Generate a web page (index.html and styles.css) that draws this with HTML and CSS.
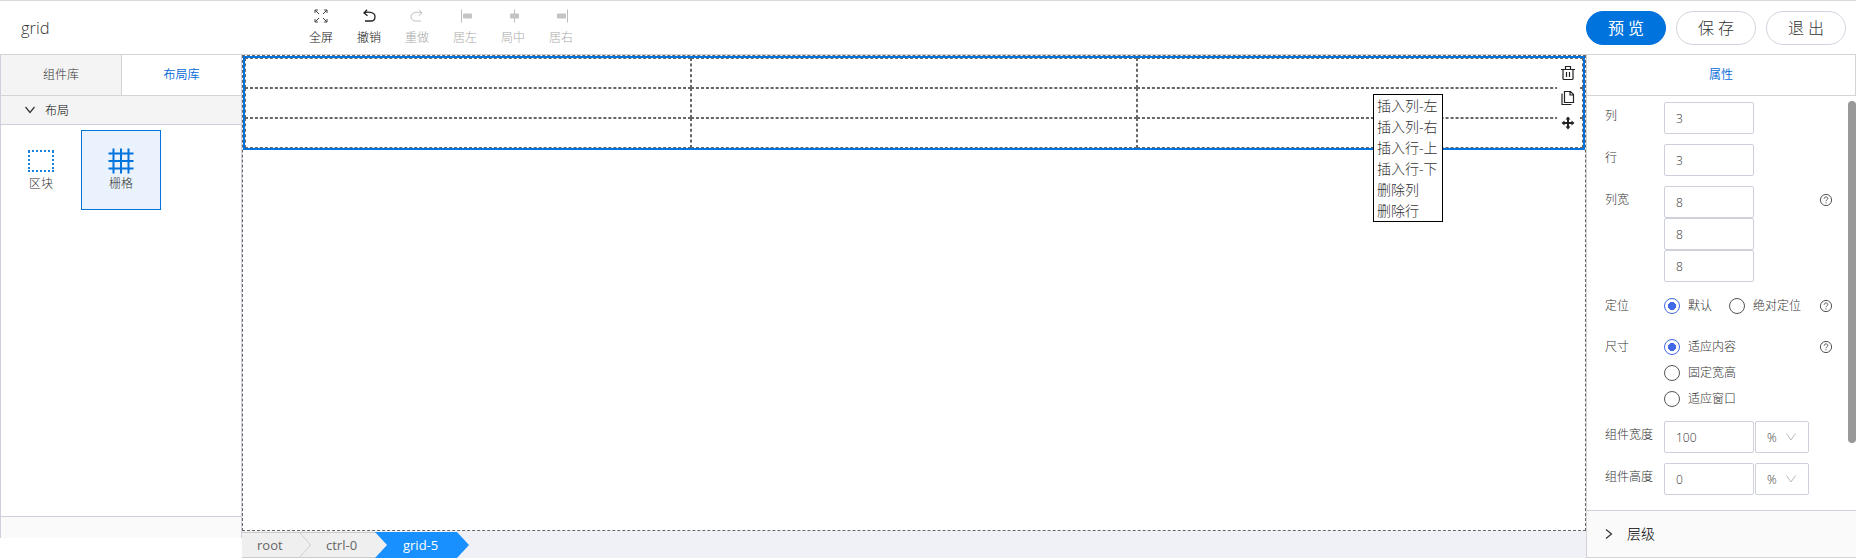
FILE: index.html
```html
<!DOCTYPE html>
<html lang="zh-CN">
<head>
<meta charset="utf-8">
<title>grid</title>
<link rel="stylesheet" href="styles.css">
</head>
<body>
<header class="header">
  <div class="title">grid</div>
  <nav class="tools">
    <div class="tool"><svg width="14" height="14" viewBox="0 0 14 14"><path d="M5 5 1 1M1 4V1h3M9 5l4-4M10 1h3v3M5 9l-4 4M1 10v3h3M9 9l4 4M13 10v3h-3"/></svg><span>全屏</span></div>
    <div class="tool undo"><svg width="14" height="14" viewBox="0 0 14 14"><path d="M5 .8 2 4l3.500 2.800M2 4c3-1.300 11-1.500 11 3.700 0 3-2 4.300-4 4.300H3"/></svg><span>撤销</span></div>
    <div class="tool off"><svg width="14" height="14" viewBox="0 0 14 14"><path d="M9 .8 12 4 8.500 6.800M12 4C9 2.700 1 2.500 1 7.700 1 10.700 3 12 5 12h6"/></svg><span>重做</span></div>
    <div class="tool off"><svg width="14" height="14" viewBox="0 0 14 14"><path d="M3.500 .5v13"/><rect class="solid" x="5" y="4.500" width="9" height="5" rx="1"/></svg><span>居左</span></div>
    <div class="tool off"><svg width="14" height="14" viewBox="0 0 14 14"><path d="M8.500 .5v13"/><rect class="solid" x="4" y="4.500" width="9" height="5" rx="1"/></svg><span>局中</span></div>
    <div class="tool off"><svg width="14" height="14" viewBox="0 0 14 14"><path d="M13.500 .5v13"/><rect class="solid" x="3" y="4.500" width="9" height="5" rx="1"/></svg><span>居右</span></div>
  </nav>
  <div class="actions">
    <button class="btn primary">预 览</button>
    <button class="btn">保 存</button>
    <button class="btn">退 出</button>
  </div>
</header>
<main class="main">
  <aside class="library">
    <div class="tabs"><div class="tab">组件库</div><div class="tab active">布局库</div></div>
    <div class="group"><svg width="12" height="12" viewBox="0 0 12 12"><path d="M1.500 3 6 8.500 10.500 3"/></svg><span>布局</span></div>
    <div class="items">
      <div class="item"><svg width="26" height="26" viewBox="0 0 26 26"><path class="dots" d="M0 3h26M1 3v20M25 3v20M0 23h26"/></svg><span>区块</span></div>
      <div class="item selected"><svg width="26" height="26" viewBox="0 0 26 26"><path class="hash" d="M5.500 .5v25M13 .5v25M20.500 .5v25M.5 5.500h25M.5 13h25M.5 20.500h25"/></svg><span>栅格</span></div>
    </div>
    <div class="library-foot"></div>
  </aside>
  <section class="center">
    <div class="canvas">
      <div class="grid-widget">
        <div class="cell"></div><div class="cell"></div><div class="cell"></div>
        <div class="cell"></div><div class="cell"></div><div class="cell"></div>
        <div class="cell"></div><div class="cell"></div><div class="cell"></div>
        <div class="widget-tools">
          <div><svg width="14" height="16" viewBox="0 0 14 16"><path d="M0 4.500h14M4.500 4V1.500h5V4M2 4.500v9q0 1 1 1h8q1 0 1-1v-9M5.500 7v5M8.500 7v5"/></svg></div>
          <div><svg width="14" height="16" viewBox="0 0 14 16"><path d="M3.500 1.500h6l3 3v8h-9zM9 1.500V5h3.500M1 3.500v11h9.500"/></svg></div>
          <div><svg width="14" height="16" viewBox="0 0 14 16"><path class="move" d="M7 3v10M2 8h10"/><path class="solid" d="M7 1.500 9.500 4.500h-5zM7 14.500l2.500-3h-5zM.5 8l3-2.500v5zM13.500 8l-3-2.500v5z"/></svg></div>
        </div>
      </div>
      <div class="menu"><div>插入列-左</div><div>插入列-右</div><div>插入行-上</div><div>插入行-下</div><div>删除列</div><div>删除行</div></div>
    </div>
    <div class="crumbs">
      <div class="crumb root">root</div>
      <svg class="sep" width="13" height="26" viewBox="0 0 13 26"><path d="M.5 0 12 13 .5 26"/></svg>
      <div class="crumb ctrl">ctrl-0</div>
      <div class="crumb current">grid-5</div>
    </div>
  </section>
  <aside class="props">
    <div class="props-tab">属性</div>
    <div class="form">
      <div class="row"><label>列</label><div class="input">3</div></div>
      <div class="row"><label>行</label><div class="input">3</div></div>
      <div class="row widths"><label>列宽</label><div><div class="input">8</div><div class="input">8</div><div class="input">8</div></div>
        <svg class="help" width="14" height="14" viewBox="0 0 14 14"><circle cx="7" cy="7" r="5.600"/><path d="M5.200 5.700c0-2.400 3.600-2.300 3.600-.2 0 1.300-1.800 1.300-1.800 2.700M7 9.300v1.100"/></svg></div>
      <div class="row position"><label>定位</label><div class="radios"><span class="radio on">默认</span><span class="radio second">绝对定位</span></div>
        <svg class="help" width="14" height="14" viewBox="0 0 14 14"><circle cx="7" cy="7" r="5.600"/><path d="M5.200 5.700c0-2.400 3.600-2.300 3.600-.2 0 1.300-1.800 1.300-1.800 2.700M7 9.300v1.100"/></svg></div>
      <div class="row size"><label>尺寸</label><div><span class="radio on">适应内容</span><span class="radio">固定宽高</span><span class="radio">适应窗口</span></div>
        <svg class="help" width="14" height="14" viewBox="0 0 14 14"><circle cx="7" cy="7" r="5.600"/><path d="M5.200 5.700c0-2.400 3.600-2.300 3.600-.2 0 1.300-1.800 1.300-1.800 2.700M7 9.300v1.100"/></svg></div>
      <div class="row"><label>组件宽度</label><div class="input">100</div><div class="select">%<svg width="12" height="12" viewBox="0 0 12 12"><path d="M1.500 2.500 6 9l4.500-6.500"/></svg></div></div>
      <div class="row"><label>组件高度</label><div class="input">0</div><div class="select">%<svg width="12" height="12" viewBox="0 0 12 12"><path d="M1.500 2.500 6 9l4.500-6.500"/></svg></div></div>
      <div class="scrollbar"></div>
    </div>
    <div class="level"><svg width="12" height="12" viewBox="0 0 12 12"><path d="M3 1.500 8.500 6 3 10.500"/></svg><span>层级</span></div>
  </aside>
</main>
</body>
</html>
```
FILE: styles.css
```css
* { box-sizing: border-box; }
body {
  margin: 0;
  width: 1856px;
  height: 558px;
  overflow: hidden;
  background: #fff;
  color: #333;
  font: 300 12px/18px "Open Sans", "Noto Sans CJK SC", sans-serif;
}
svg { display: block; fill: none; stroke: #444; stroke-width: 1; flex: none; }
svg .solid { stroke: none; fill: #222; }

.header { display: flex; height: 54px; border-top: 1px solid #d9d9df; }
.title { width: 297px; padding: 16px 0 0 21px; font-size: 16.5px; line-height: 22px; }
.tools { display: flex; flex: 1; }
.tool { width: 48px; display: flex; flex-direction: column; align-items: center; padding-top: 8px; gap: 6px; color: #111; }
.undo svg { stroke: #222; stroke-width: 1.3; }
.off { color: #a8a8a8; }
.off svg { stroke: #bfbfbf; }
.off .solid { fill: #c4c4c4; }
.actions { display: flex; gap: 10px; padding: 10px 10px 0 0; }
.btn {
  width: 80px; height: 34px; padding: 0;
  border: 1px solid #d3d5df; border-radius: 17px;
  background: #fff; color: #333;
  font: inherit; font-size: 16px;
}
.primary { background: #0073dd; border-color: #0073dd; color: #fff; font-weight: 400; }

.main { display: flex; height: 504px; }
.library { width: 242px; height: 484px; display: flex; flex-direction: column; border: 1px solid #ced1dc; border-top-color: #d4d4d4; border-bottom: 0; }
.tabs { display: flex; height: 41px; border-bottom: 1px solid #d4d4d4; }
.tab { width: 121px; padding-top: 11px; text-align: center; background: #f4f4f4; border-right: 1px solid #d4d4d4; }
.tab.active { width: 119px; background: #fff; color: #0068d8; border: 0; font-weight: 350; }
.group { display: flex; align-items: center; height: 29px; padding-left: 23px; gap: 9px; background: #f4f4f4; border-bottom: 1px solid #ced1dc; color: #000; }
.group svg { stroke: #333; stroke-width: 1.2; }
.group span { padding-top: 1px; }
.items { display: flex; flex: 1; padding-top: 5px; }
.item { width: 80px; height: 80px; display: flex; flex-direction: column; align-items: center; padding-top: 17px; gap: 1px; border: 1px solid transparent; }
.item.selected { background: #eaf3fd; border-color: #0073dd; }
.dots { stroke: #1a80df; stroke-width: 2; stroke-dasharray: 2 2; }
.hash { stroke: #0073dd; stroke-width: 2; }
.library-foot { height: 22px; background: #fafafa; border-top: 1px solid #ced1dc; }

.center { width: 1344px; border-top: 1px solid #d4d4d4; background: #f0f1f6; }
.canvas { position: relative; height: 476px; border: 1px dashed #666; background: #fff; }
.grid-widget { position: relative; display: grid; grid-template: repeat(3, 30px) / repeat(3, 1fr); border: 2px solid #0073dd; }
.cell { border: 1px dashed #666; }
.widget-tools { position: absolute; top: 2px; right: 4px; width: 22px; background: #fff; }
.widget-tools div { height: 25px; display: flex; align-items: center; justify-content: center; }
.widget-tools svg { stroke: #222; stroke-width: 1.2; }
.widget-tools .move { stroke-width: 2; }
.menu { position: absolute; left: 1130px; top: 38px; width: 70px; height: 128px; padding: 0 3px; border: 1px solid #000; background: #fff; font-size: 14px; line-height: 21px; white-space: nowrap; }

.crumbs { display: flex; height: 27px; font-size: 13px; line-height: 25px; color: #666; padding-top: 1px; font-weight: 400; }
.crumb { height: 26px; background: #efefef; border-top: 1px solid #ccc; border-bottom: 1px solid #ccc; }
.root { width: 57px; padding-left: 15px; }
.sep { background: #efefef; border-top: 1px solid #ccc; border-bottom: 1px solid #ccc; stroke: #ccc; }
.ctrl { width: 76px; padding-left: 14px; }
.current { width: 94px; margin-left: -13px; padding-left: 28px; border: 0; line-height: 27px; background: #1890ff; color: #fff; clip-path: polygon(0 0, 82px 0, 94px 50%, 82px 100%, 0 100%, 12px 50%); }

.props { width: 270px; border: 1px solid #d4d4d4; border-right: 0; }
.props-tab { height: 41px; padding-top: 11px; text-align: center; color: #0068d8; font-weight: 350; border-bottom: 1px solid #d4d4d4; border-right: 1px solid #d4d4d4; }
.form { position: relative; height: 414px; padding: 6px 0 0 18px; }
.row { position: relative; display: flex; height: 42px; }
.row label { width: 59px; padding-top: 5px; white-space: nowrap; }
.input, .select { height: 32px; border: 1px solid #ced1dc; border-radius: 2px; line-height: 31px; }
.input { width: 90px; padding-left: 11px; }
.select { width: 54px; margin-left: 1px; padding-left: 11px; display: flex; align-items: center; gap: 8px; }
.select svg { stroke: #bbb; }
.help { position: absolute; left: 214px; top: 7px; stroke: #555; }
.row.widths { height: 105px; }
.row.position { height: 41px; }
.row.size { height: 89px; }
.position label, .size label { padding-top: 6px; }
.position .help { top: 8px; }
.size .help { top: 8px; }
.radios { display: flex; }
.radio { display: flex; align-items: center; gap: 8px; height: 26px; padding-top: 3px; }
.radio::before { content: ""; width: 14px; height: 14px; border: 1px solid #555; border-radius: 50%; }
.radio.on::before { border-color: #4169e8; background: radial-gradient(circle, #4169e8 3.8px, transparent 4.3px); }
.second { margin-left: 17px; }
.scrollbar { position: absolute; right: 0; top: 5px; width: 8px; height: 342px; border-radius: 4px; background: #999; }
.level { display: flex; align-items: center; height: 48px; gap: 12px; padding-left: 16px; background: #fafafa; border-top: 1px solid #ced1dc; border-bottom: 1px solid #d4d4d4; font-size: 14px; color: #000; }
.level svg { stroke: #333; stroke-width: 1.2; }
```
